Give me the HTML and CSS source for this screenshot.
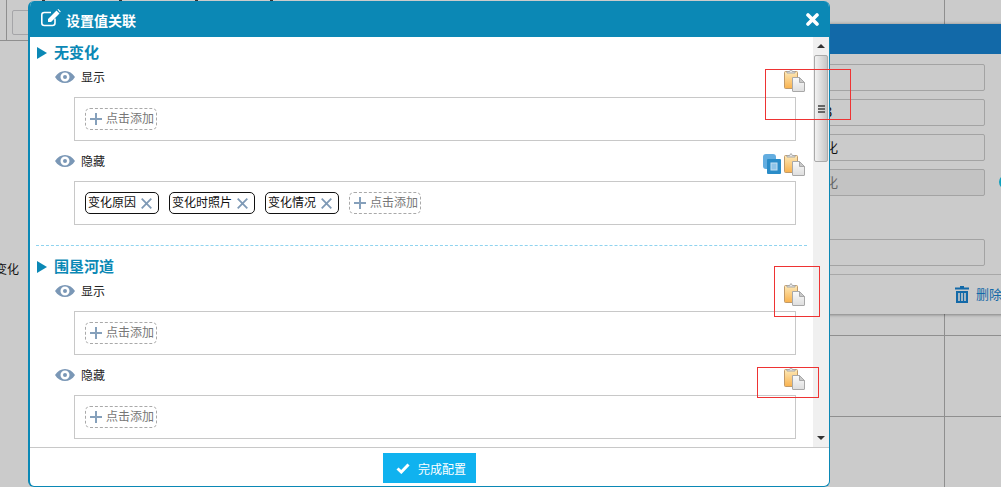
FILE: index.html
```html
<!DOCTYPE html>
<html lang="zh-CN">
<head>
    <meta charset="UTF-8">
    <meta name="viewport" content="width=device-width, initial-scale=1.0">
    <title>设置值关联</title>
    <link rel="stylesheet" href="styles.css">
</head>
<body>
    <svg class="defs" width="0" height="0">
        <defs>
            <linearGradient id="clipFill" x1="0" y1="0" x2="0" y2="1">
                <stop offset="0" stop-color="#fde9b8"/>
                <stop offset="1" stop-color="#f9b24e"/>
            </linearGradient>
            <linearGradient id="pageFill" x1="0" y1="0" x2="0" y2="1">
                <stop offset="0" stop-color="#fafafa"/>
                <stop offset="1" stop-color="#dedede"/>
            </linearGradient>
            <symbol id="eye" viewBox="0 0 20 12">
                <path fill="#7a97b6" fill-rule="evenodd" d="M0 6C2.500 2 6 0 10 0s7.500 2 10 6c-2.500 4-6 6-10 6S2.500 10 0 6zm10-4.500a4.500 4.500 0 1 0 0 9 4.500 4.500 0 0 0 0-9zM10 4a2 2 0 1 1 0 4 2 2 0 0 1 0-4z"/>
            </symbol>
            <symbol id="plus" viewBox="0 0 12 12">
                <path fill="#85a0bb" d="M5 0h2v5h5v2H7v5H5V7H0V5h5z"/>
            </symbol>
            <symbol id="cross" viewBox="0 0 11 11">
                <path stroke="#7f9ab6" stroke-width="1.800" d="M.7.7l9.600 9.600M10.300.7L.7 10.300"/>
            </symbol>
            <symbol id="clipboard" viewBox="0 0 22 23">
                <rect x="0.500" y="2.500" width="13" height="17" rx="1" fill="url(#clipFill)" stroke="#c09a6a"/>
                <path d="M3 4V2.500h2.500L7 .5l1.500 2H11V4z" fill="#e8e8e8" stroke="#a9a9a9"/>
                <path d="M8.500 8.500h7l5 5v8.500a.5.5 0 0 1-.5.500H9a.5.5 0 0 1-.5-.5z" fill="url(#pageFill)" stroke="#a8a8a8"/>
                <path d="M15.500 8.500v5h5z" fill="#c9c9c9" stroke="#a8a8a8"/>
            </symbol>
            <symbol id="copy" viewBox="0 0 18 20">
                <rect x="0" y="0" width="13" height="15" rx="3" fill="#63ade0"/>
                <rect x="4" y="5" width="14" height="15" rx="1" fill="#2a8cc8"/>
                <rect x="8" y="9" width="6" height="7" fill="#8fc4e8" stroke="#c4e0f3"/>
            </symbol>
        </defs>
    </svg>

    <!-- 背景页面 -->
    <div class="backdrop">
        <i class="top-tick tick-a"></i>
        <i class="top-tick tick-b"></i>
        <i class="top-tick tick-c"></i>
        <i class="top-tick tick-d"></i>
        <div class="line line-h line-left"></div>
        <div class="line line-v line-corner"></div>
        <div class="ghost-box"></div>
        <div class="line line-v line-top"></div>
        <div class="line line-h line-row1"></div>
        <div class="line line-h line-row2"></div>
        <div class="line line-v line-bottom"></div>
        <span class="ghost-text">变化</span>
    </div>

    <!-- 后面的弹窗 -->
    <div class="back-window">
        <div class="back-header"></div>
        <div class="back-form">
            <div class="back-input"></div>
            <div class="back-input">3</div>
            <div class="back-input">化</div>
            <div class="back-input is-disabled">化<i class="back-dot"></i></div>
            <div class="back-input back-input-last"></div>
        </div>
        <div class="back-footer">
            <svg class="trash" width="14" height="17" viewBox="0 0 14 17">
                <path fill="#1269a8" d="M5 0h4v1.500h5V3.500H0V1.500h5zM1 5h12v12H1zm2.200 2v8h1.600V7zm3 0v8h1.600V7zm3 0v8h1.600V7z" fill-rule="evenodd"/>
            </svg>
            <span class="back-delete">删除</span>
        </div>
    </div>

    <div class="modal">
        <div class="modal-header">
            <svg class="edit-icon" width="20" height="18" viewBox="0 0 20 18">
                <path fill="none" stroke="#fff" stroke-width="1.600" d="M14 9.500V14a2.500 2.500 0 0 1-2.500 2.500H3.300A2.500 2.500 0 0 1 .8 14V6a2.500 2.500 0 0 1 2.500-2.500H10"/>
                <path fill="#fff" d="M15.500 1.500l3 3L10 13H7v-3zM16.500.5l.8-.5 2.500 2.500-.8 1z"/>
            </svg>
            <span class="modal-title">设置值关联</span>
            <svg class="close-icon" width="13" height="13" viewBox="0 0 13 13">
                <path stroke="#fff" stroke-width="3.600" stroke-linecap="round" d="M2 2l9 9M11 2l-9 9"/>
            </svg>
        </div>

        <div class="modal-body">
            <div class="content">
                <div class="section">
                    <div class="section-title"><i class="arrow"></i><span>无变化</span></div>
                    <div class="row">
                        <svg class="eye"><use href="#eye"/></svg>
                        <span class="row-label">显示</span>
                        <svg class="paste"><use href="#clipboard"/></svg>
                    </div>
                    <div class="tag-box">
                        <span class="add-btn"><svg class="plus"><use href="#plus"/></svg><span class="chip-text">点击添加</span></span>
                    </div>
                    <div class="row">
                        <svg class="eye"><use href="#eye"/></svg>
                        <span class="row-label">隐藏</span>
                        <svg class="copy"><use href="#copy"/></svg>
                        <svg class="paste"><use href="#clipboard"/></svg>
                    </div>
                    <div class="tag-box">
                        <span class="tag"><span class="chip-text">变化原因</span><svg class="cross"><use href="#cross"/></svg></span>
                        <span class="tag"><span class="chip-text">变化时照片</span><svg class="cross"><use href="#cross"/></svg></span>
                        <span class="tag"><span class="chip-text">变化情况</span><svg class="cross"><use href="#cross"/></svg></span>
                        <span class="add-btn"><svg class="plus"><use href="#plus"/></svg><span class="chip-text">点击添加</span></span>
                    </div>
                </div>
                <div class="divider"></div>
                <div class="section">
                    <div class="section-title"><i class="arrow"></i><span>围垦河道</span></div>
                    <div class="row">
                        <svg class="eye"><use href="#eye"/></svg>
                        <span class="row-label">显示</span>
                        <svg class="paste"><use href="#clipboard"/></svg>
                    </div>
                    <div class="tag-box">
                        <span class="add-btn"><svg class="plus"><use href="#plus"/></svg><span class="chip-text">点击添加</span></span>
                    </div>
                    <div class="row">
                        <svg class="eye"><use href="#eye"/></svg>
                        <span class="row-label">隐藏</span>
                        <svg class="paste"><use href="#clipboard"/></svg>
                    </div>
                    <div class="tag-box">
                        <span class="add-btn"><svg class="plus"><use href="#plus"/></svg><span class="chip-text">点击添加</span></span>
                    </div>
                </div>
            </div>
            <div class="scrollbar">
                <i class="scroll-up"></i>
                <div class="scroll-thumb"><b></b></div>
                <i class="scroll-down"></i>
            </div>
        </div>

        <div class="modal-footer">
            <button class="done-btn">
                <svg width="14" height="11" viewBox="0 0 14 11">
                    <path fill="none" stroke="#fff" stroke-width="3" d="M1.500 5.500l3.800 3.500 7.200-7.500"/>
                </svg>
                完成配置
            </button>
        </div>
    </div>

    <!-- 截图上的红框标注 -->
    <div class="mark mark-a"></div>
    <div class="mark mark-b"></div>
    <div class="mark mark-c"></div>
</body>
</html>
```

FILE: styles.css
```css
* {
    box-sizing: border-box;
}

html, body {
    height: 100%;
}

body {
    margin: 0;
    overflow: hidden;
    position: relative;
    background-color: #cbcbcb;
    font-family: "Noto Sans CJK SC", "Liberation Sans", sans-serif;
    font-size: 12px;
    color: #222;
}

.defs {
    position: absolute;
}

.line {
    position: absolute;
    background-color: #8f8f8f;
}

.line-h {
    height: 1px;
}

.line-v {
    width: 1px;
}

.line-left {
    top: 40px;
    left: 0;
    width: 28px;
}

.line-corner {
    top: 0;
    left: 6px;
    height: 40px;
}

.line-top {
    top: 0;
    left: 944px;
    height: 24px;
}

.line-row1 {
    top: 335px;
    left: 830px;
    width: 171px;
}

.line-row2 {
    top: 416px;
    left: 830px;
    width: 171px;
}

.line-bottom {
    top: 314px;
    left: 944px;
    height: 173px;
}

.top-tick {
    position: absolute;
    top: 0;
    width: 3px;
    height: 1px;
    background-color: #333;
}

.tick-a { left: 42px; }
.tick-b { left: 119px; }
.tick-c { left: 195px; }
.tick-d { left: 270px; }

.ghost-box {
    position: absolute;
    left: 12px;
    top: 10px;
    width: 30px;
    height: 25px;
    border: 1px solid #a5a5a8;
    border-radius: 2px;
}

.ghost-text {
    position: absolute;
    left: -5px;
    top: 260px;
    line-height: 18px;
    color: #111;
}

.back-window {
    position: absolute;
    left: 780px;
    top: 24px;
    width: 320px;
    height: 290px;
    background-color: #cbcbcb;
    box-shadow: 0 1px 3px rgba(0,0,0,0.35), 0 -1px 3px rgba(0,0,0,0.12);
}

.back-header {
    height: 30px;
    background-color: #1269a8;
}

.back-form {
    padding: 10px 115px 0 0;
    height: 220px;
}

.back-input {
    position: relative;
    height: 27px;
    margin-bottom: 8px;
    padding-left: 44px;
    line-height: 23px;
    font-size: 13px;
    color: #111;
    border: 1px solid #a3a3a3;
    border-radius: 2px;
}

.back-input.is-disabled {
    background-color: #c3c3c3;
    color: #666;
}

.back-input-last {
    margin-top: 43px;
}

.back-dot {
    position: absolute;
    right: -29px;
    top: 5px;
    width: 14px;
    height: 14px;
    border-radius: 50%;
    background-color: #0fa0bd;
}

.back-footer {
    display: flex;
    align-items: center;
    height: 40px;
    padding-left: 175px;
    border-top: 1px solid #a8a8a8;
    font-size: 13px;
    color: #1269a8;
}

.trash {
    margin-right: 7px;
}

.back-delete {
    padding-bottom: 2px;
}

.modal {
    position: absolute;
    left: 28px;
    top: 1px;
    width: 802px;
    height: 486px;
    display: flex;
    flex-direction: column;
    background-color: white;
    border: solid #0b88b5;
    border-width: 0 1px 1px 2px;
    border-radius: 6px;
    overflow: hidden;
}

.modal-header {
    display: flex;
    align-items: center;
    flex: none;
    height: 36px;
    padding: 0 11px;
    margin-right: -1px;
    background-color: #0b88b5;
    color: white;
}

.edit-icon {
    margin-right: 5px;
    margin-top: -3px;
}

.modal-title {
    flex: 1;
    padding-top: 2px;
    font-size: 14px;
    font-weight: bold;
}

.modal-body {
    display: flex;
    flex: 1;
    min-height: 0;
}

.content {
    flex: 1;
    min-width: 0;
    padding: 6px 6px 0 6px;
    overflow: hidden;
}

.section-title {
    display: flex;
    align-items: center;
    height: 20px;
    padding-left: 1px;
    font-size: 15px;
    font-weight: bold;
    color: #0b88b5;
}

.section-title span {
    padding-bottom: 4px;
}

.arrow {
    width: 0;
    height: 0;
    margin-right: 7px;
    border-style: solid;
    border-width: 6px 0 6px 10px;
    border-color: transparent transparent transparent #0b88b5;
}

.row {
    display: flex;
    align-items: center;
    height: 24px;
    margin-top: 2px;
    padding-left: 19px;
    padding-right: 1px;
}

.eye {
    width: 20px;
    height: 12px;
    margin-right: 6px;
}

.row-label {
    padding-bottom: 2px;
}

.paste {
    width: 22px;
    height: 23px;
    margin-left: auto;
    margin-top: 6px;
}

.copy + .paste {
    margin-left: 3px;
}

.copy {
    width: 18px;
    height: 20px;
    margin-left: auto;
    margin-top: 6px;
}

.tag-box {
    display: flex;
    align-items: center;
    gap: 10px;
    height: 44px;
    margin: 8px 11px 8px 38px;
    padding-left: 10px;
    border: 1px solid #c8c8c8;
}

.tag,
.add-btn {
    display: flex;
    align-items: center;
    height: 22px;
    border-radius: 5px;
    white-space: nowrap;
}

.chip-text {
    padding-bottom: 3px;
}

.tag {
    padding: 0 6px 0 2px;
    border: 1px solid #111;
    color: #111;
}

.add-btn {
    width: 72px;
    padding-left: 4px;
    border: 1px dashed #a9a9a9;
    color: #777;
}

.plus {
    width: 12px;
    height: 12px;
    margin-right: 4px;
}

.cross {
    width: 11px;
    height: 11px;
    margin-left: 5px;
}

.divider {
    margin: 20px 0 11px;
    border-top: 1px dashed #8fd3ef;
}

.scrollbar {
    position: relative;
    flex: none;
    width: 16px;
    background-color: #f0f0f0;
}

.scroll-up,
.scroll-down {
    position: absolute;
    left: 4px;
    width: 0;
    height: 0;
    border-style: solid;
    border-color: transparent;
}

.scroll-up {
    top: 7px;
    border-width: 0 4px 4px;
    border-bottom-color: #333;
}

.scroll-down {
    bottom: 7px;
    border-width: 4px 4px 0;
    border-top-color: #333;
}

.scroll-thumb {
    position: absolute;
    left: 1px;
    top: 18px;
    width: 14px;
    height: 107px;
    display: flex;
    align-items: center;
    justify-content: center;
    background: linear-gradient(to right, #f2f2f2, #c6c6c6);
    border: 1px solid #aaa;
    border-radius: 2px;
}

.scroll-thumb b {
    display: block;
    width: 7px;
    height: 8px;
    border-top: 2px solid #666;
    border-bottom: 2px solid #666;
    background: linear-gradient(#666, #666) center / 100% 2px no-repeat;
}

.modal-footer {
    display: flex;
    justify-content: center;
    align-items: flex-start;
    flex: none;
    height: 39px;
    padding-top: 5px;
    border-top: 1px solid #c8c8c8;
}

.done-btn {
    display: flex;
    align-items: center;
    gap: 8px;
    width: 93px;
    height: 30px;
    padding: 0 0 0 13px;
    border: none;
    background-color: #10b2ef;
    color: white;
    font: inherit;
}

.mark {
    position: absolute;
    border: 1px solid #ee3333;
}

.mark-a {
    left: 765px;
    top: 69px;
    width: 86px;
    height: 51px;
}

.mark-b {
    left: 774px;
    top: 266px;
    width: 46px;
    height: 51px;
}

.mark-c {
    left: 757px;
    top: 367px;
    width: 62px;
    height: 31px;
}
```
